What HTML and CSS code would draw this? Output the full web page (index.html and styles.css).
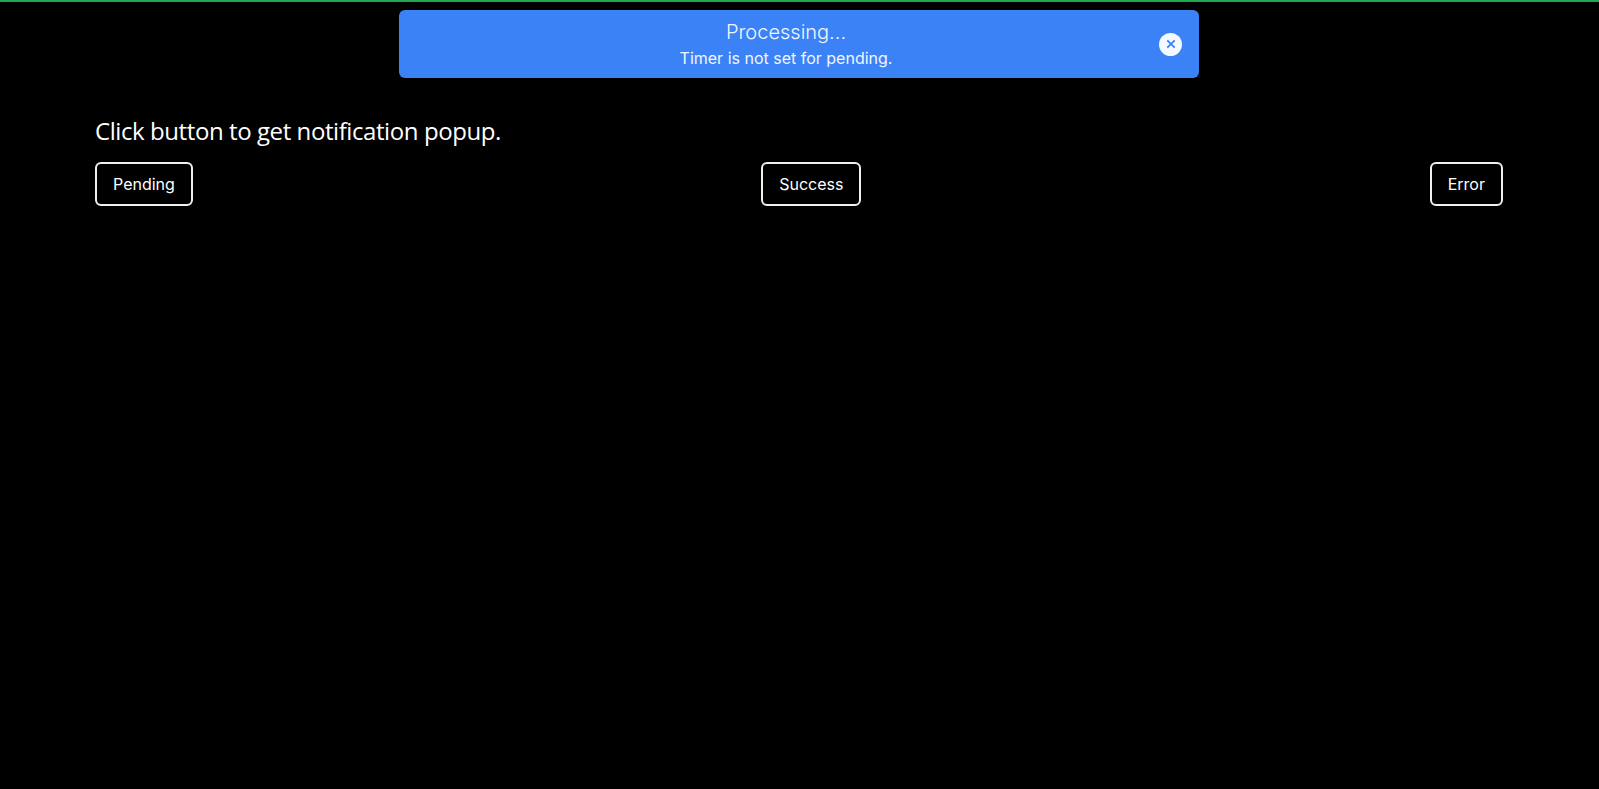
FILE: index.html
```html
<!DOCTYPE html>
<html lang="en">
<head>
    <meta charset="UTF-8">
    <meta name="viewport" content="width=device-width, initial-scale=1.0">
    <title>Notification Popup</title>
    <link rel="stylesheet" href="styles.css">
</head>
<body>
    <div class="top-line"></div>

    <div class="toast">
        <div class="toast-text">
            <div class="toast-title">Processing...</div>
            <div class="toast-message">Timer is not set for pending.</div>
        </div>
        <button class="toast-close" aria-label="Close">
            <svg width="10" height="10" viewBox="0 0 10 10">
                <path d="M1.3 1.3L8.7 8.7M8.7 1.3L1.3 8.7" stroke="#3b82f6" stroke-width="1.8" fill="none"/>
            </svg>
        </button>
    </div>

    <main class="container">
        <h1>Click button to get notification popup.</h1>
        <div class="actions">
            <button class="btn">Pending</button>
            <button class="btn">Success</button>
            <button class="btn">Error</button>
        </div>
    </main>
</body>
</html>
```

FILE: styles.css
```css
* {
    margin: 0;
    padding: 0;
    box-sizing: border-box;
}

body {
    background-color: #000000;
    color: #ffffff;
    font-family: 'Inter', sans-serif;
    min-height: 100vh;
}

.top-line {
    height: 2px;
    background-color: #22a854;
}

.toast {
    position: fixed;
    top: 10px;
    left: 399px;
    width: 800px;
    height: 68px;
    display: flex;
    align-items: center;
    padding: 0 17px 0 14px;
    background-color: #3b82f6;
    border-radius: 6px;
}

.toast-text {
    flex: 1;
    text-align: center;
    color: #f0f6ff;
}

.toast-title {
    font-size: 20px;
    font-weight: 300;
    line-height: 28px;
}

.toast-message {
    font-size: 16px;
    font-weight: 400;
    line-height: 24px;
}

.toast-close {
    width: 23px;
    height: 23px;
    display: flex;
    align-items: center;
    justify-content: center;
    border: none;
    border-radius: 50%;
    background-color: #f4f8ff;
}

.container {
    padding: 113px 96px 0 95px;
}

h1 {
    font-family: 'Open Sans', sans-serif;
    font-size: 24px;
    font-weight: 400;
    line-height: 32px;
    letter-spacing: -0.42px;
    margin-bottom: 15px;
}

.actions {
    display: flex;
    justify-content: space-between;
}

.btn {
    height: 44px;
    padding: 0 16px;
    background-color: #000000;
    color: #ffffff;
    border: 2px solid #f0f0f0;
    border-radius: 6px;
    font-family: 'Inter', sans-serif;
    font-size: 16px;
}
```
